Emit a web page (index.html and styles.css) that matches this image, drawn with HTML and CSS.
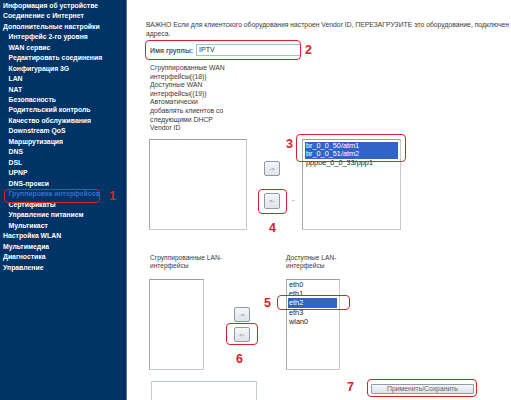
FILE: index.html
```html
<!DOCTYPE html>
<html lang="ru">
<head>
<meta charset="utf-8">
<link rel="stylesheet" href="styles.css">
</head>
<body>
<div class="page">
  <nav class="sidebar">
    <ul class="menu">
      <li class="top">Информация об устройстве</li>
      <li class="top">Соединение с Интернет</li>
      <li class="top">Дополнительные настройки</li>
      <li class="sub">Интерфейс 2-го уровня</li>
      <li class="sub">WAN сервис</li>
      <li class="sub">Редактировать соединения</li>
      <li class="sub">Конфигурация 3G</li>
      <li class="sub">LAN</li>
      <li class="sub">NAT</li>
      <li class="sub">Безопасность</li>
      <li class="sub">Родительский контроль</li>
      <li class="sub">Качество обслуживания</li>
      <li class="sub">Downstream QoS</li>
      <li class="sub">Маршрутизация</li>
      <li class="sub">DNS</li>
      <li class="sub">DSL</li>
      <li class="sub">UPNP</li>
      <li class="sub">DNS-прокси</li>
      <li class="sub active">Группировка интерфейсов</li>
      <li class="sub">Сертификаты</li>
      <li class="sub">Управление питанием</li>
      <li class="sub">Мультикаст</li>
      <li class="top">Настройка WLAN</li>
      <li class="top">Мультимедиа</li>
      <li class="top">Диагностика</li>
      <li class="top">Управление</li>
    </ul>
  </nav>
  <main class="content">
    <p class="warn">ВАЖНО Если для клиентского оборудования настроен Vendor ID, ПЕРЕЗАГРУЗИТЕ это оборудование, подключен<br>адреса.</p>
    <div class="group-row">
      <span class="group-label">Имя группы:</span>
      <span class="text-input">IPTV</span>
    </div>
    <div class="wan-labels">Сгруппированные WAN<br>интерфейсы((18))<br>Доступные WAN<br>интерфейсы((19))<br>Автоматически<br>добавлять клиентов со<br>следующими DHCP<br>Vendor ID</div>
    <div class="pick pick-wan">
      <div class="listbox wan-left"></div>
      <div class="btn-col wan-btns">
        <span class="mini-btn">-&gt;</span>
        <span class="mini-btn">&lt;-</span>
      </div>
      <span class="dash">-</span>
      <div class="listbox wan-right">
        <div class="item sel">br_0_0_50/atm1</div>
        <div class="item sel">br_0_0_51/atm2</div>
        <div class="item">pppoe_0_0_33/ppp1</div>
      </div>
    </div>
    <div class="lan-labels">
      <div>Сгруппированные LAN-<br>интерфейсы</div>
      <div>Доступные LAN-<br>интерфейсы</div>
    </div>
    <div class="pick pick-lan">
      <div class="listbox lan-left"></div>
      <div class="btn-col lan-btns">
        <span class="mini-btn">-&gt;</span>
        <span class="mini-btn">&lt;-</span>
      </div>
      <div class="listbox lan-right">
        <div class="item">eth0</div>
        <div class="item">eth1</div>
        <div class="item sel">eth2</div>
        <div class="item">eth3</div>
        <div class="item">wlan0</div>
      </div>
    </div>
    <div class="bottom-row">
      <div class="bottom-box"></div>
      <span class="apply-btn">Применить/Сохранить</span>
    </div>
  </main>

  <div class="mark box1"></div><span class="num n1">1</span>
  <div class="mark box2"></div><span class="num n2">2</span>
  <div class="mark box3"></div><span class="num n3">3</span>
  <div class="mark box4"></div><span class="num n4">4</span>
  <div class="mark box5"></div><span class="num n5">5</span>
  <div class="mark box6"></div><span class="num n6">6</span>
  <div class="mark box7"></div><span class="num n7">7</span>
</div>
</body>
</html>
```
FILE: styles.css
```css
html, body {
  margin: 0;
  padding: 0;
  background: #fff;
  overflow: hidden;
}
.page {
  position: relative;
  display: flex;
  width: 511px;
  height: 400px;
  overflow: hidden;
  font-family: "Liberation Sans", Arial, sans-serif;
}
.sidebar {
  flex: 0 0 126px;
  height: 400px;
  background: #003366;
  box-shadow: inset -4px 0 0 #022f5e;
  border-right: 1px solid #4f73a0;
}
.menu {
  list-style: none;
  margin: 0;
  padding: 0.8px 0 0 0;
}
.menu li {
  font-size: 6.85px;
  font-weight: bold;
  line-height: 10.47px;
  color: #fff;
  white-space: nowrap;
}
.menu .top { padding-left: 3px; }
.menu .sub { padding-left: 8.5px; }
.menu .active { color: #3a6ccf; }

.content {
  flex: 1 1 auto;
  padding: 19.5px 0 0 19px;
  color: #3a3a3a;
  font-size: 6.85px;
  min-width: 0;
  overflow: hidden;
}
.warn {
  margin: 0;
  line-height: 9px;
  white-space: nowrap;
  font-size: 6.8px;
}
.group-row {
  display: flex;
  align-items: center;
  margin: 6.5px 0 0 4px;
  height: 12px;
  gap: 3px;
}
.group-label {
  font-weight: bold;
  color: #555;
}
.text-input {
  box-sizing: border-box;
  width: 105px;
  height: 12px;
  border: 1px solid #a9bccf;
  line-height: 10px;
  padding-left: 2px;
  color: #333;
  font-size: 7px;
}
.wan-labels {
  margin: 8px 0 0 4px;
  line-height: 8.6px;
}
.pick {
  display: flex;
  align-items: center;
  margin-left: 3px;
}
.listbox {
  box-sizing: border-box;
  height: 91px;
  border: 1px solid #c8c8c8;
  border-top-color: #9c9c9c;
  border-left-color: #a8a8a8;
  background: #fff;
  align-self: flex-start;
  color: #222;
  font-size: 7.3px;
}
.pick-wan { margin-top: 6.7px; }
.wan-left { width: 98px; }
.wan-btns { margin-left: 17px; gap: 17px; }
.dash { margin-left: 12px; width: 10px; padding-top: 30px; color: #666; }
.wan-right { width: 99px; padding: 1.4px 2px 0; }
.wan-right .item { line-height: 8.4px; }

.btn-col {
  display: flex;
  flex-direction: column;
  align-self: center;
}
.mini-btn {
  box-sizing: border-box;
  width: 16px;
  height: 15.5px;
  border: 1px solid #8e9aa8;
  border-radius: 2px;
  background: linear-gradient(#f4f6f8, #dfe4ea);
  font-size: 6px;
  color: #6a6a6a;
  display: flex;
  align-items: center;
  justify-content: center;
}
.item { padding-left: 1px; white-space: nowrap; }
.item.sel { background: #3264c8; color: #fff; }

.lan-labels {
  display: grid;
  grid-template-columns: 136px auto;
  margin: 23.6px 0 0 4px;
  line-height: 8.4px;
  font-size: 6.6px;
}
.pick-lan { margin-top: 8.4px; }
.lan-left { width: 55px; }
.lan-btns { margin-left: 30px; gap: 4.5px; }
.lan-right { width: 54px; margin-left: 36px; padding: 0 2px 0 1px; }
.lan-right .item { line-height: 9.1px; }

.bottom-row {
  display: flex;
  align-items: flex-start;
  margin: 10.7px 0 0 5px;
}
.bottom-box {
  width: 106px;
  height: 30px;
  box-sizing: border-box;
  border: 1px solid #c4ced9;
  border-top-color: #b8c4d2;
}
.apply-btn {
  margin: 3px 0 0 114px;
  box-sizing: border-box;
  width: 103px;
  height: 10px;
  border: 1px solid #8e9aa8;
  border-radius: 1px;
  background: linear-gradient(#f5f6f8, #dde2e8);
  font-size: 6.8px;
  line-height: 8px;
  color: #666;
  text-align: center;
}

/* annotation overlay */
.mark {
  position: absolute;
  box-sizing: border-box;
  border: 1.5px solid #d8232a;
  border-radius: 4px;
}
.num {
  position: absolute;
  color: #d8232a;
  font-weight: bold;
  font-size: 12.5px;
  line-height: 12px;
}
.box1 { left: 4px; top: 189px; width: 96px; height: 14px; }
.n1 { left: 109px; top: 190px; }
.box2 { left: 145px; top: 40px; width: 156px; height: 20px; }
.n2 { left: 305px; top: 44px; }
.box3 { left: 296px; top: 134px; width: 110px; height: 28px; }
.n3 { left: 286px; top: 138px; }
.box4 { left: 258px; top: 189px; width: 29px; height: 25px; }
.n4 { left: 269px; top: 222px; }
.box5 { left: 277px; top: 295px; width: 73px; height: 15px; }
.n5 { left: 264px; top: 297px; }
.box6 { left: 226px; top: 323px; width: 32px; height: 22px; }
.n6 { left: 236px; top: 353px; }
.box7 { left: 367px; top: 379px; width: 110px; height: 18px; }
.n7 { left: 347px; top: 381px; }
```
